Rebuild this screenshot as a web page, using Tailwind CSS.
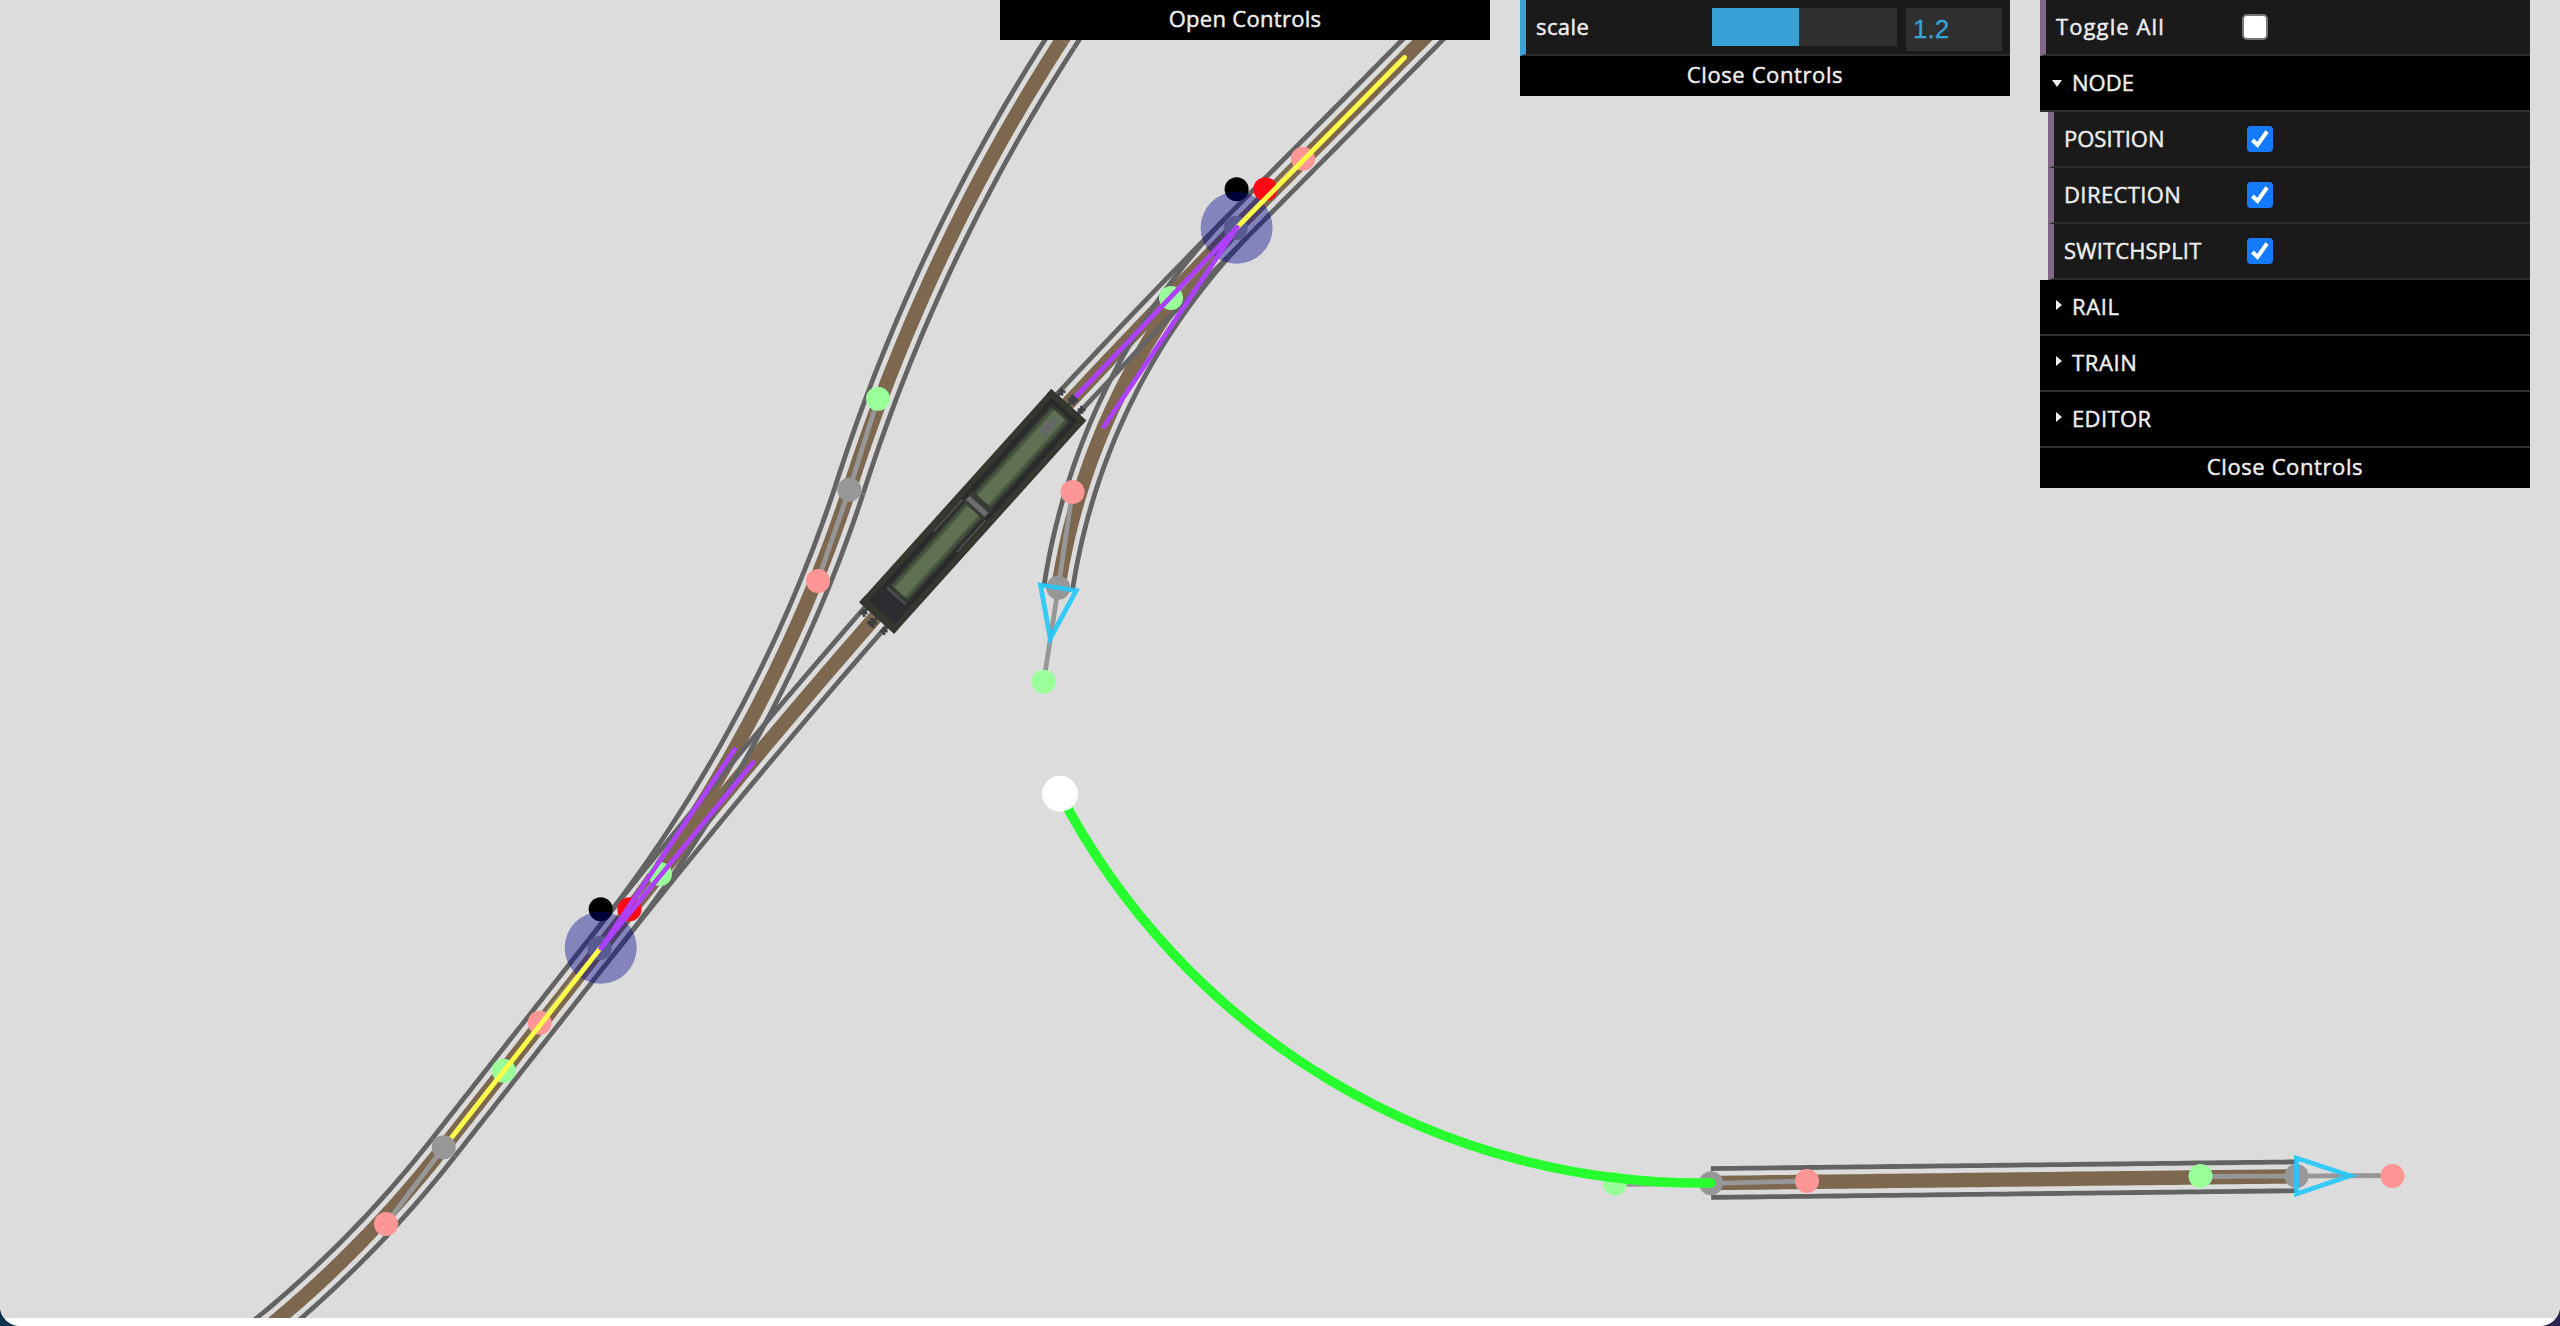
<!DOCTYPE html>
<html lang="en">
<head>
<meta charset="utf-8">
<title>Rail editor</title>
<script src="https://cdn.jsdelivr.net/npm/@tailwindcss/browser@4"></script>
</head>
<body class="relative h-[1326px] w-[2560px] overflow-hidden bg-linear-to-r from-[#0d3350] to-[#2c2550] font-['Open_Sans','Noto_Sans',sans-serif] text-[22px] leading-none text-[#eeeeee]">
<main class="h-full w-full overflow-hidden rounded-b-[20px] bg-white">
<svg id="scene" class="block" width="2560" height="1318" viewBox="0 0 2560 1318">
  <defs>
    <linearGradient id="hull" x1="0" y1="0" x2="0" y2="1">
      <stop offset="0" stop-color="#33352f"/><stop offset=".1" stop-color="#363831"/>
      <stop offset=".17" stop-color="#26282a"/><stop offset=".25" stop-color="#30332f"/>
      <stop offset=".5" stop-color="#3a4035"/>
      <stop offset=".75" stop-color="#30332f"/><stop offset=".83" stop-color="#26282a"/>
      <stop offset=".9" stop-color="#363831"/><stop offset="1" stop-color="#33352f"/>
    </linearGradient>
    <linearGradient id="roof" x1="0" y1="0" x2="0" y2="1">
      <stop offset="0" stop-color="#3a4236"/><stop offset=".16" stop-color="#4a5a42"/>
      <stop offset=".24" stop-color="#5f7053"/><stop offset=".76" stop-color="#5f7053"/>
      <stop offset=".84" stop-color="#4a5a42"/><stop offset="1" stop-color="#3a4236"/>
    </linearGradient>
  </defs>
  <rect width="2560" height="1318" fill="#dcdcdc"/>
  <g id="tracks" fill="none"></g>

  <!-- direction handles -->
  <g stroke="#979797" stroke-width="4.8" fill="none">
    <path d="M878 398.7L849.3 489.7L818 580"/>
    <path d="M1072.3 492.3L1058.3 587.7L1043.7 681.7"/>
    <path d="M386 1224L443.7 1147.3L503.7 1070.7"/>
    <path d="M539.7 1022.7L600 948L660.7 874"/>
    <path d="M1303 158.7L1236 228L1171 298"/>
    <path d="M1615 1184.5L1711 1183.3L1807 1181"/>
    <path d="M2200.500 1176.500L2392 1175.500"/>
  </g>
  <g fill="#979797">
    <circle cx="849.3" cy="489.7" r="12"/><circle cx="1058.3" cy="587.7" r="12"/>
    <circle cx="599.6" cy="948" r="12"/><circle cx="1235.700" cy="228" r="12"/>
    <circle cx="1711" cy="1183.3" r="12"/><circle cx="2296.500" cy="1176" r="12"/>
  </g>
  <g fill="#ff9696">
    <circle cx="818" cy="581" r="12"/><circle cx="1072.5" cy="492" r="12"/>
    <circle cx="386" cy="1224" r="12"/><circle cx="539.7" cy="1022.7" r="12"/>
    <circle cx="1303" cy="158.7" r="12"/><circle cx="1807" cy="1181" r="12"/>
    <circle cx="2392.500" cy="1176" r="12"/>
  </g>
  <g fill="#99ff99">
    <circle cx="878" cy="398.7" r="12"/><circle cx="1043.7" cy="681.7" r="12"/>
    <circle cx="503.7" cy="1070.7" r="12"/><circle cx="660" cy="874" r="12"/>
    <circle cx="1171" cy="298" r="12"/><circle cx="1615" cy="1183.500" r="12"/>
    <circle cx="2200.500" cy="1176" r="12"/>
  </g>
  <g fill="none" stroke="#22c8fa" stroke-opacity=".9" stroke-width="4.8">
    <path d="M2296.500 1158V1194L2350 1175.700Z"/>
    <path d="M1040.500 585L1076.200 590.500L1050.200 638.500Z"/>
  </g>

  <!-- switches -->
  <circle cx="1236.600" cy="189.300" r="12"/><circle cx="1265.300" cy="189.300" r="12" fill="#ff0a14"/>
  <circle cx="600.700" cy="909.300" r="12"/><circle cx="629.400" cy="909.300" r="12" fill="#ff0a14"/>
  <g fill="#00008b" fill-opacity=".4"><circle cx="1236.600" cy="227.700" r="36"/><circle cx="600.700" cy="947.700" r="36"/></g>
  <g stroke="#ffff47" stroke-width="4.8" stroke-linecap="round">
    <path d="M1237 227.500L1404.500 57.500"/><path d="M600.500 948L445 1146"/>
  </g>
  <circle cx="443.700" cy="1147.300" r="12" fill="#979797"/>
  <g stroke="#ae40ff" stroke-width="4.8" stroke-linecap="round">
    <path d="M1237 227.500L1075 397.500"/><path d="M1237 227.500L1104 426.500"/>
    <path d="M601 948L734.600 749.500"/><path d="M601 948L753 762.700"/>
  </g>

  <!-- draft rail -->
  <path d="M1060 794A724 724 0 0 0 1711 1183" fill="none" stroke="#28ff2e" stroke-width="9.600" stroke-linecap="round"/>
  <circle cx="1060" cy="793.700" r="18" fill="#fff"/>

  <!-- train -->
  <g transform="translate(972.700 511.400) rotate(-48)">
    <g stroke="#3f4043" stroke-width="2.600" fill="none">
      <path d="M143 -14H151M146 -17L151 -11M151 -17L146 -11M143 13H151M146 10L151 16M151 10L146 16"/>
      <path d="M-143 -13H-151M-146 -16L-151 -10M-151 -16L-146 -10M-143 14H-151M-146 11L-151 17M-151 11L-146 17"/>
      <path d="M143 0H154M147 -4L153 4M153 -4L147 4M-143 0H-154M-147 -4L-153 4M-153 -4L-147 4" stroke-width="3.400"/>
    </g>
    <rect x="-143.500" y="-23.500" width="287" height="47" fill="url(#hull)"/>
    <rect x="-143.500" y="-23.500" width="8" height="47" fill="#34362f"/>
    <rect x="137" y="-23.500" width="6.500" height="47" fill="#34362f"/>
    <rect x="133.500" y="-17" width="3.500" height="34" fill="#26282a"/>
    <rect x="-135.500" y="-17" width="22" height="34" fill="#2c2d31"/>
    <rect x="-109" y="-11.500" width="110" height="23" fill="url(#roof)"/>
    <rect x="15" y="-11.500" width="115" height="23" fill="url(#roof)"/>
    <rect x="1" y="-14" width="14" height="28" fill="#383c34"/>
    <rect x="4" y="-12.500" width="5.500" height="25" fill="#6c6d6c"/>
    <path d="M-114 -12.500V12.500" stroke="#4c4d4c" stroke-width="2.400"/>
    <path d="M-41 -15.500H2M-41 15.500H2" stroke="#4c4d4b" stroke-width="2"/>
    <path d="M104 -3L108 -5L117 -5L119 -2H126V2H119L117 5L108 5L104 2Z" fill="#666967"/>
  </g>
</svg>
</main>

<div class="absolute top-0 right-[30px] flex items-start gap-[30px] [-webkit-text-stroke:0.45px_#eeeeee]">
  <section class="flex h-10 w-[490px] items-center justify-center bg-black pb-1"><span class="tracking-[0.3px]">Open Controls</span></section>

  <section class="w-[490px]">
    <div class="flex h-14 items-start border-b-2 border-l-6 border-b-[#2c2c2c] border-l-[#38a2d6] bg-[#1a1a1a]">
      <span class="w-[186px] pl-[10px] leading-[52px] tracking-[0.4px]">scale</span>
      <div class="mt-2 h-[38px] w-[185px] bg-[#303030]"><div class="h-full w-[87px] bg-[#38a2d6]"></div></div>
      <div class="mt-2 ml-[9px] h-[43px] w-24 bg-[#303030] pl-[7px] font-['Liberation_Sans',sans-serif] text-[26px] leading-[42px] text-[#38a2d6] [-webkit-text-stroke:0.3px_#38a2d6]">1.2</div>
    </div>
    <div class="flex h-10 items-center justify-center bg-black pb-1"><span class="tracking-[0.6px]">Close Controls</span></div>
  </section>

  <section class="w-[490px]">
    <div class="flex h-14 items-center border-b-2 border-l-6 border-b-[#2c2c2c] border-l-[#806787] bg-[#1a1a1a]">
      <span class="w-[196px] pb-[2px] pl-[10px] tracking-[1.1px]">Toggle All</span>
      <span class="size-[26px] rounded-[5px] border-2 border-[#767676] bg-white"></span>
    </div>
    <div class="flex h-14 items-center border-b-2 border-[#303030] bg-black pl-3">
      <svg class="mr-[10px]" width="10" height="7"><path d="M0 0H10L5 7Z" fill="#eee"/></svg><span class="pb-[2px]">NODE</span>
    </div>
    <div class="ml-2">
      <div class="flex h-14 items-center border-b-2 border-l-6 border-b-[#2c2c2c] border-l-[#806787] bg-[#1a1a1a]">
        <span class="w-[193px] pb-[2px] pl-[10px]">POSITION</span>
        <svg class="rounded-[4px] bg-[#147aff]" width="26" height="26"><path d="M5.500 14L10.500 19L20 5.500" fill="none" stroke="#fff" stroke-width="4"/></svg>
      </div>
      <div class="flex h-14 items-center border-b-2 border-l-6 border-b-[#2c2c2c] border-l-[#806787] bg-[#1a1a1a]">
        <span class="w-[193px] pb-[2px] pl-[10px] tracking-[0.4px]">DIRECTION</span>
        <svg class="rounded-[4px] bg-[#147aff]" width="26" height="26"><path d="M5.500 14L10.500 19L20 5.500" fill="none" stroke="#fff" stroke-width="4"/></svg>
      </div>
      <div class="flex h-14 items-center border-b-2 border-l-6 border-b-[#2c2c2c] border-l-[#806787] bg-[#1a1a1a]">
        <span class="w-[193px] pb-[2px] pl-[10px] tracking-[0.15px]">SWITCHSPLIT</span>
        <svg class="rounded-[4px] bg-[#147aff]" width="26" height="26"><path d="M5.500 14L10.500 19L20 5.500" fill="none" stroke="#fff" stroke-width="4"/></svg>
      </div>
    </div>
    <div class="flex h-14 items-center border-b-2 border-[#303030] bg-black pl-4">
      <svg class="mr-[10px] mb-1" width="6" height="10"><path d="M0 0V10L6 5Z" fill="#eee"/></svg><span class="pb-[2px] tracking-[0.6px]">RAIL</span>
    </div>
    <div class="flex h-14 items-center border-b-2 border-[#303030] bg-black pl-4">
      <svg class="mr-[10px] mb-1" width="6" height="10"><path d="M0 0V10L6 5Z" fill="#eee"/></svg><span class="pb-[2px] tracking-[0.6px]">TRAIN</span>
    </div>
    <div class="flex h-14 items-center border-b-2 border-[#303030] bg-black pl-4">
      <svg class="mr-[10px] mb-1" width="6" height="10"><path d="M0 0V10L6 5Z" fill="#eee"/></svg><span class="pb-[2px] tracking-[0.4px]">EDITOR</span>
    </div>
    <div class="flex h-10 items-center justify-center bg-black pb-1"><span class="tracking-[0.6px]">Close Controls</span></div>
  </section>
</div>

<script>
// Each rail is a circular arc given by its end points; `turn` is half of its turning angle in degrees.
const rails = [
  [[600.7, 947.7], [849.3, 489.7], -10.2],
  [[849.3, 489.7], [1062, 40], 7.6],
  [[1062, 40], [1090, -4], 0],
  [[600.7, 947.7], [1236.3, 227.7], 3.1],
  [[1236.3, 227.7], [1470, -8], 0],
  [[1236.3, 227.7], [1058.3, 587.7], -17.6],
  [[443.7, 1147.3], [600.7, 947.7], 0],
  [[443.7, 1147.3], [260, 1334], 6.5],
  [[1711, 1183], [2296.5, 1176.3], 0]
];
function arc(a, b, turn, offset) {
  const dx = b[0] - a[0], dy = b[1] - a[1], c = Math.hypot(dx, dy);
  const base = Math.atan2(dy, dx), t = turn * Math.PI / 180, n = 48;
  const pts = [];
  for (let i = 0; i <= n; i++) {
    const s = i / n, ang = base - t + 2 * t * s;
    let x, y;
    if (Math.abs(t) < 1e-6) { x = a[0] + dx * s; y = a[1] + dy * s; }
    else {
      const r = c / (2 * Math.sin(t));
      x = a[0] + r * (Math.sin(ang) - Math.sin(base - t));
      y = a[1] - r * (Math.cos(ang) - Math.cos(base - t));
    }
    pts.push((x - Math.sin(ang) * offset).toFixed(2) + ' ' + (y + Math.cos(ang) * offset).toFixed(2));
  }
  return 'M' + pts.join('L');
}
const host = document.getElementById('tracks');
function stroke(d, color, width) {
  const p = document.createElementNS('http://www.w3.org/2000/svg', 'path');
  p.setAttribute('d', d);
  p.setAttribute('stroke', color);
  p.setAttribute('stroke-width', width);
  host.appendChild(p);
}
for (const [a, b, t] of rails) stroke(arc(a, b, t, 0), '#7d684f', 14.4);
for (const [a, b, t] of rails) for (const o of [-14.4, 14.4]) stroke(arc(a, b, t, o), '#636363', 4.8);
</script>
</body>
</html>
